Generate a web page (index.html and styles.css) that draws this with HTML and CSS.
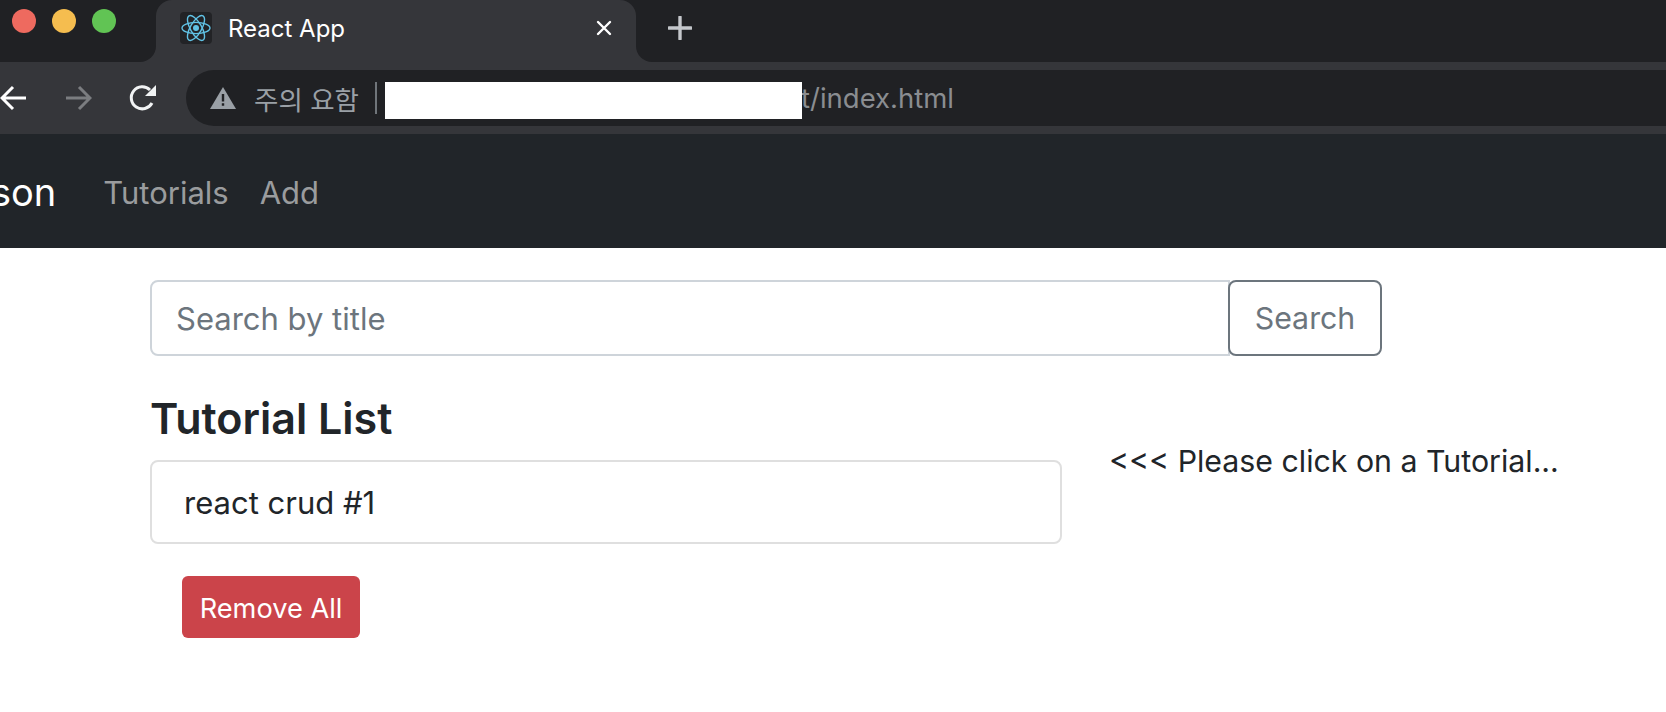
FILE: index.html
```html
<!DOCTYPE html>
<html lang="ko">
<head>
    <meta charset="UTF-8">
    <title>React App</title>
    <link rel="stylesheet" href="styles.css">
</head>
<body>
    <div class="tab-strip">
        <div class="window-controls">
            <span class="light red"></span>
            <span class="light yellow"></span>
            <span class="light green"></span>
        </div>
        <div class="tab-wrap">
            <div class="tab">
                <svg class="favicon" viewBox="0 0 32 32">
                    <rect width="32" height="32" rx="4" fill="#222326"/>
                    <g fill="none" stroke="#61c3e6" stroke-width="1.4">
                        <ellipse cx="16" cy="16" rx="14" ry="5.6"/>
                        <ellipse cx="16" cy="16" rx="14" ry="5.6" transform="rotate(60 16 16)"/>
                        <ellipse cx="16" cy="16" rx="14" ry="5.6" transform="rotate(120 16 16)"/>
                    </g>
                    <circle cx="16" cy="16" r="3" fill="#61c3e6"/>
                </svg>
                <span class="tab-title">React App</span>
                <svg class="tab-close" viewBox="0 0 16 16">
                    <path d="M2 2L14 14M14 2L2 14" stroke="#fff" stroke-width="2.4" stroke-linecap="round"/>
                </svg>
            </div>
        </div>
        <div class="strip-rest">
            <svg class="new-tab" viewBox="0 0 24 24">
                <path d="M12 1V23M1 12H23" stroke="#c4c7cb" stroke-width="3.4" stroke-linecap="round"/>
            </svg>
        </div>
    </div>

    <div class="toolbar">
        <svg class="tool-icon back" viewBox="0 0 28 26">
            <path d="M26 13H2M13 2L2 13L13 24" fill="none" stroke="#fff" stroke-width="3"/>
        </svg>
        <svg class="tool-icon forward" viewBox="0 0 28 26">
            <path d="M2 13H26M15 2L26 13L15 24" fill="none" stroke="#7b7d80" stroke-width="3"/>
        </svg>
        <svg class="tool-icon reload" viewBox="0 0 28 28">
            <path d="M23 19A11 11 0 1 1 21 6" fill="none" stroke="#f1f3f4" stroke-width="3"/>
            <path d="M27 1V12H16Z" fill="#f1f3f4"/>
        </svg>
        <div class="omnibox">
            <svg class="warn" viewBox="0 0 26 22">
                <path d="M13 0L26 22H0Z" fill="#9aa0a6"/>
                <path d="M11.8 7H14.2V14.5H11.8ZM11.8 16.3H14.2V18.7H11.8Z" fill="#202124"/>
            </svg>
            <span class="warn-text">주의 요함</span>
            <span class="url-sep"></span>
            <span class="url-mask"></span>
            <span class="url-path">t/index.html</span>
        </div>
    </div>

    <nav class="navbar">
        <a class="brand" href="#">son</a>
        <a class="nav-link" href="#">Tutorials</a>
        <a class="nav-link" href="#">Add</a>
    </nav>

    <main class="content">
        <div class="search-row">
            <input class="search-input" type="text" placeholder="Search by title">
            <button class="search-btn" type="button">Search</button>
        </div>
        <div class="columns">
            <div class="list-col">
                <h4>Tutorial List</h4>
                <ul class="list">
                    <li>react crud #1</li>
                </ul>
                <button class="remove-btn" type="button">Remove All</button>
            </div>
            <p class="hint">&lt;&lt;&lt; Please click on a Tutorial...</p>
        </div>
    </main>
</body>
</html>
```

FILE: styles.css
```css
* {
    box-sizing: border-box;
}

body {
    margin: 0;
    width: 1666px;
    height: 712px;
    overflow: hidden;
    background-color: white;
    font-family: Inter, "Noto Sans CJK KR", sans-serif;
    color: #212529;
}

/* browser chrome */
.tab-strip {
    display: flex;
    height: 62px;
    background-color: #35363a;
}

.window-controls {
    display: flex;
    gap: 16px;
    width: 156px;
    padding: 9px 0 0 12px;
    background-color: #202124;
    border-bottom-right-radius: 16px;
}

.light {
    width: 24px;
    height: 24px;
    border-radius: 50%;
}

.red { background-color: #ee6a5f; }
.yellow { background-color: #f5bd4f; }
.green { background-color: #61c454; }

.tab-wrap {
    width: 480px;
    background-color: #202124;
}

.tab {
    display: flex;
    align-items: center;
    height: 62px;
    padding: 0 0 6px 24px;
    background-color: #35363a;
    border-radius: 16px 16px 0 0;
}

.favicon {
    width: 32px;
    height: 32px;
}

.tab-title {
    margin-left: 16px;
    font-size: 24px;
    color: white;
}

.tab-close {
    width: 16px;
    height: 16px;
    margin-left: auto;
    margin-right: 24px;
}

.strip-rest {
    flex: 1;
    padding: 16px 0 0 32px;
    background-color: #202124;
    border-bottom-left-radius: 16px;
}

.new-tab {
    display: block;
    width: 24px;
    height: 24px;
}

.toolbar {
    display: flex;
    align-items: center;
    height: 72px;
    padding: 8px 0;
    background-color: #35363a;
}

.tool-icon {
    flex-shrink: 0;
}

.back {
    width: 28px;
    height: 26px;
}

.forward {
    width: 28px;
    height: 26px;
    margin-left: 36px;
}

.reload {
    width: 28px;
    height: 28px;
    margin-left: 37px;
}

.omnibox {
    display: flex;
    align-items: center;
    flex: 1;
    height: 56px;
    margin-left: 29px;
    padding-left: 24px;
    background-color: #202124;
    border-radius: 28px 0 0 28px;
}

.warn {
    width: 26px;
    height: 22px;
}

.warn-text {
    margin-left: 18px;
    font-size: 26.5px;
    color: #9aa0a6;
}

.url-sep {
    width: 2px;
    height: 32px;
    margin-left: 16px;
    background-color: #70757a;
}

.url-mask {
    position: relative;
    z-index: 1;
    width: 417px;
    height: 37px;
    margin: 5px -1px 0 8px;
    background-color: white;
}

.url-path {
    font-size: 27.5px;
    color: #8a8d91;
}

/* page */
.navbar {
    display: flex;
    align-items: center;
    gap: 31px;
    height: 114px;
    padding-top: 2px;
    background-color: #212529;
}

.navbar a {
    text-decoration: none;
}

.brand {
    margin-right: 16px;
    margin-left: -9px;
    font-size: 38px;
    color: white;
}

.nav-link {
    font-size: 31px;
    color: #9a9c9e;
}

.content {
    padding: 32px 0 0 150px;
}

.search-row {
    display: flex;
    width: 1232px;
    height: 76px;
}

.search-input {
    flex: 1;
    margin-right: -2px;
    padding: 0 24px;
    font-family: inherit;
    font-size: 31px;
    background-color: white;
    border: 2px solid #ced4da;
    border-radius: 8px 0 0 8px;
}

.search-input::placeholder {
    color: #6c757d;
    opacity: 1;
}

.search-btn {
    width: 154px;
    padding: 0;
    font-family: inherit;
    font-size: 30.3px;
    color: #6c757d;
    background-color: white;
    border: 2px solid #6c757d;
    border-radius: 8px;
}

.columns {
    display: flex;
    margin-top: 36px;
}

.list-col {
    width: 912px;
}

h4 {
    margin: 0 0 16px;
    font-size: 43px;
    font-weight: 600;
    line-height: 52px;
}

.list {
    margin: 0;
    padding: 0;
    list-style: none;
}

.list li {
    height: 84px;
    padding: 0 32px;
    font-size: 31px;
    line-height: 81px;
    border: 2px solid #dfdfdf;
    border-radius: 8px;
}

.remove-btn {
    display: block;
    width: 178px;
    height: 62px;
    margin: 32px 0 0 32px;
    padding: 2px 0 0;
    font-family: inherit;
    font-size: 27.2px;
    color: white;
    background-color: #cb444a;
    border: none;
    border-radius: 6px;
}

.hint {
    margin: 51px 0 0 47px;
    font-size: 30.3px;
}
```
